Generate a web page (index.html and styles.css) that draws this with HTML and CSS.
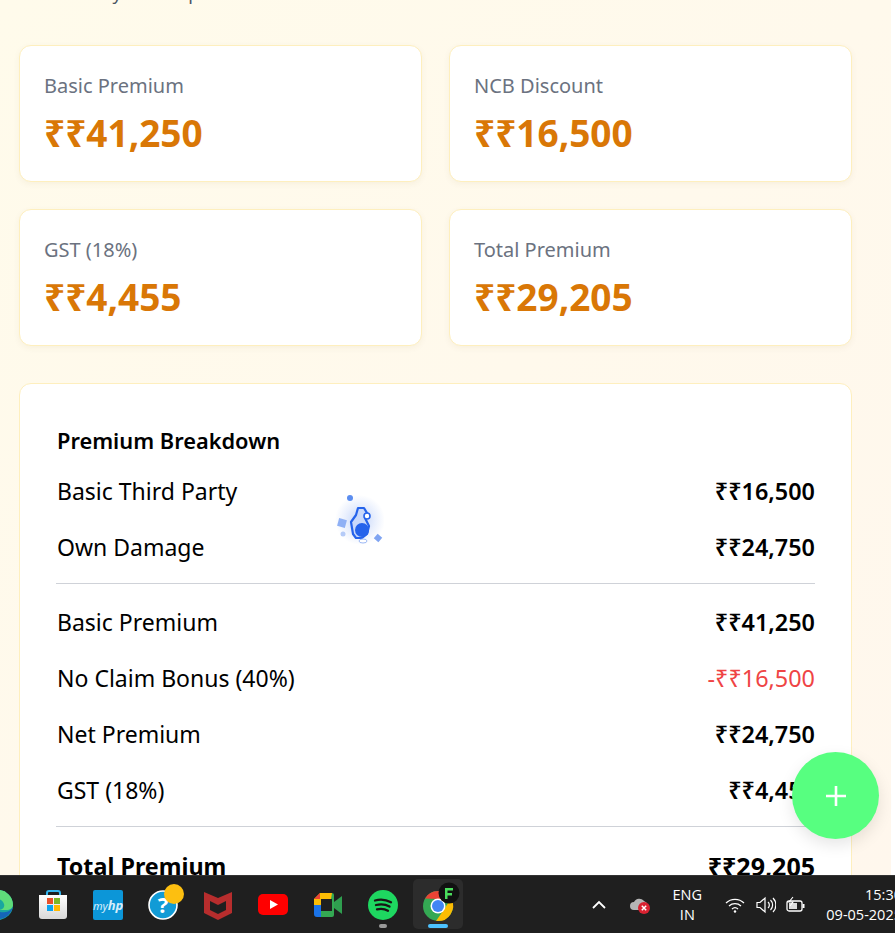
FILE: index.html
```html
<!DOCTYPE html>
<html lang="en">
<head>
  <meta charset="UTF-8">
  <title>Premium Summary</title>
  <link rel="stylesheet" href="styles.css">
</head>
<body>
  <div class="screen">
    <div class="page">
      <div class="content">
        <p class="subtitle">Review your net premium</p>

        <div class="stats">
          <div class="stat-card">
            <div class="stat-label">Basic Premium</div>
            <div class="stat-value">₹₹41,250</div>
          </div>
          <div class="stat-card">
            <div class="stat-label">NCB Discount</div>
            <div class="stat-value">₹₹16,500</div>
          </div>
          <div class="stat-card">
            <div class="stat-label">GST (18%)</div>
            <div class="stat-value">₹₹4,455</div>
          </div>
          <div class="stat-card">
            <div class="stat-label">Total Premium</div>
            <div class="stat-value">₹₹29,205</div>
          </div>
        </div>

        <div class="breakdown">
          <h3>Premium Breakdown</h3>
          <div class="row"><span>Basic Third Party</span><span class="amount">₹₹16,500</span></div>
          <div class="row"><span>Own Damage</span><span class="amount">₹₹24,750</span></div>
          <hr>
          <div class="row"><span>Basic Premium</span><span class="amount">₹₹41,250</span></div>
          <div class="row"><span>No Claim Bonus (40%)</span><span class="amount minus">-₹₹16,500</span></div>
          <div class="row"><span>Net Premium</span><span class="amount">₹₹24,750</span></div>
          <div class="row"><span>GST (18%)</span><span class="amount">₹₹4,455</span></div>
          <hr>
          <div class="row total"><span>Total Premium</span><span class="amount">₹₹29,205</span></div>
        </div>
      </div>
    </div>

    <!-- floating loader -->
    <svg class="loader" width="50" height="54" viewBox="0 0 50 54">
      <defs>
        <radialGradient id="glow">
          <stop offset="0" stop-color="#2563eb" stop-opacity="0.28"/>
          <stop offset="0.6" stop-color="#2563eb" stop-opacity="0.1"/>
          <stop offset="1" stop-color="#2563eb" stop-opacity="0"/>
        </radialGradient>
      </defs>
      <circle cx="26" cy="27" r="25" fill="url(#glow)"/>
      <circle cx="16" cy="5" r="3" fill="#5b8df0"/>
      <rect x="4" y="26" width="8" height="8" transform="rotate(15 8 30)" fill="#8fb0f5"/>
      <circle cx="9" cy="41" r="2.5" fill="#b5cbf8"/>
      <rect x="41" y="42" width="6" height="6" transform="rotate(40 44 45)" fill="#7fa4f2"/>
      <path d="M24 15h6l3 5-2 5 4 8-2 8-5 4h-6l-3-4-2-12 5-7z" fill="#c9d9fb" stroke="#2563eb" stroke-width="2.200" stroke-linejoin="round"/>
      <circle cx="28" cy="37" r="7" fill="#2563eb"/>
      <circle cx="33" cy="23" r="3" fill="#fff" stroke="#2563eb" stroke-width="1.600"/>
      <ellipse cx="29" cy="48" rx="4" ry="2" fill="#fff" stroke="#9db9f5" stroke-width="1"/>
    </svg>

    <button class="fab"><svg width="24" height="24" viewBox="0 0 24 24"><path d="M12 2v20M2 12h20" stroke="#fff" stroke-width="2.600"/></svg></button>

    <div class="taskbar">
      <div class="apps">
        <div class="slot">
          <svg width="30" height="30" viewBox="0 0 30 30">
            <circle cx="15" cy="15" r="15" fill="#1aa6a0"/>
            <path d="M15 0a15 15 0 0 1 15 15c0 3-3 5-7 5H15c5 0 7-3 6-6C19 8 10 7 4 10A15 15 0 0 1 15 0z" fill="#5fdc7a"/>
            <path d="M8 27C14 31 26 30 30 17c-3 5-9 6-13 5-4-1-8-1-9 5z" fill="#1565b8"/>
          </svg>
        </div>
        <div class="slot">
          <svg width="30" height="30" viewBox="0 0 30 30">
            <defs>
              <linearGradient id="bag" x1="0" y1="0" x2="0" y2="1">
                <stop offset="0" stop-color="#fff"/>
                <stop offset="1" stop-color="#d8d8d8"/>
              </linearGradient>
            </defs>
            <path d="M9 6V3a2 2 0 0 1 2-2h9a2 2 0 0 1 2 2v3" fill="none" stroke="#33b5ee" stroke-width="2"/>
            <path d="M1 5h28v21a3 3 0 0 1-3 3H4a3 3 0 0 1-3-3z" fill="url(#bag)"/>
            <rect x="9" y="8" width="6" height="6" fill="#e8502a"/>
            <rect x="16" y="8" width="6" height="6" fill="#7cb827"/>
            <rect x="9" y="15" width="6" height="6" fill="#0ca4ef"/>
            <rect x="16" y="15" width="6" height="6" fill="#ffb902"/>
          </svg>
        </div>
        <div class="slot"><div class="myhp">my<i>hp</i></div></div>
        <div class="slot">
          <svg class="help" width="30" height="30" viewBox="0 0 30 30">
            <circle cx="15" cy="15" r="14" fill="#119bd6" stroke="#fff" stroke-width="1.600"/>
            <text x="15" y="23" text-anchor="middle" class="help-mark">?</text>
            <circle cx="26" cy="4" r="10" fill="#fdbf10"/>
          </svg>
        </div>
        <div class="slot">
          <svg width="28" height="30" viewBox="0 0 28 30">
            <path d="M0 2l14 6 14-6v21l-14 7-14-7z" fill="#b72d2d"/>
            <path d="M6 11l8 4 8-4v9l-8 4-8-4z" fill="#1f1f1f"/>
          </svg>
        </div>
        <div class="slot">
          <svg width="30" height="21" viewBox="0 0 30 21">
            <rect width="30" height="21" rx="5" fill="#f00"/>
            <path d="M12 6l8 4.500-8 4.500z" fill="#fff"/>
          </svg>
        </div>
        <div class="slot">
          <svg width="28" height="24" viewBox="0 0 28 24">
            <path d="M6 0h12v6H7v6H0V6z" fill="#fbbc04"/>
            <path d="M0 6l6-6v6z" fill="#ea4335"/>
            <path d="M0 12h7v6h11v6H3a3 3 0 0 1-3-3z" fill="#1a73e8"/>
            <path d="M18 0a2 2 0 0 1 2 2v20a2 2 0 0 1-2 2h-1v-6h1V6h-1z" fill="#34a853"/>
            <path d="M7 18h11v6H7z" fill="#34a853"/>
            <path d="M20 9l8-6v18l-8-6z" fill="#2f9e4f"/>
          </svg>
        </div>
        <div class="slot">
          <svg width="30" height="30" viewBox="0 0 30 30">
            <circle cx="15" cy="15" r="15" fill="#1ed760"/>
            <path d="M7 10.500c5-1.500 11-1 16 1.800M8 15c4.500-1.200 9.500-.8 13.500 1.600M9 19.300c3.600-.9 7.600-.6 11 1.400" fill="none" stroke="#191414" stroke-width="2.300" stroke-linecap="round"/>
          </svg>
          <span class="dot"></span>
        </div>
        <div class="slot active">
          <svg class="chrome" width="40" height="42" viewBox="0 0 40 42">
            <circle cx="15" cy="24" r="15" fill="#34a853"/>
            <path d="M2 16.500A15 15 0 0 1 28 16.500L15 17z" fill="#ea4335"/>
            <path d="M28 16.500A15 15 0 0 1 13 38.900l7-10z" fill="#fbbc04"/>
            <circle cx="15" cy="24" r="7.500" fill="#fff"/>
            <circle cx="15" cy="24" r="6" fill="#4285f4"/>
            <circle cx="26" cy="11" r="10.500" fill="#111"/>
            <path d="M22 6h8v2.500h-5.500v2.500H29v2.500h-4.500V17H22z" fill="#4ade5c"/>
          </svg>
          <span class="bar"></span>
        </div>
      </div>

      <div class="tray">
        <svg width="16" height="10" viewBox="0 0 16 10"><path d="M2 8l6-6 6 6" fill="none" stroke="#fff" stroke-width="1.800"/></svg>
        <svg class="cloud" width="22" height="20" viewBox="0 0 22 20">
          <path d="M5 15a4 4 0 0 1 0-8 6 6 0 0 1 10-1 5 5 0 0 1 1 9z" fill="#b5b5b5"/>
          <circle cx="15" cy="13" r="6" fill="#d92231"/>
          <path d="M12.800 10.800l4.400 4.400M17.200 10.800l-4.400 4.400" stroke="#fff" stroke-width="1.500"/>
        </svg>
        <div class="lang">ENG<br>IN</div>
        <div class="tray-icons">
          <svg width="20" height="16" viewBox="0 0 20 16" fill="none" stroke="#fff" stroke-width="1.300">
            <path d="M1 6a13 13 0 0 1 18 0M4 9a9 9 0 0 1 12 0M7 12a4.500 4.500 0 0 1 6 0"/>
            <circle cx="10" cy="14.500" r="1.200" fill="#fff" stroke="none"/>
          </svg>
          <svg width="20" height="18" viewBox="0 0 20 18" fill="none" stroke="#fff" stroke-width="1.200">
            <path d="M1 6.500h3L9 2v14l-5-4.500H1z"/>
            <path d="M12 6a4 4 0 0 1 0 6M14.500 4a7 7 0 0 1 0 10M17 2a10 10 0 0 1 0 14"/>
          </svg>
          <svg width="20" height="18" viewBox="0 0 20 18" fill="none" stroke="#fff" stroke-width="1.300">
            <rect x="1" y="5" width="15" height="10" rx="2"/>
            <rect x="3" y="7" width="8" height="6" fill="#ddd" stroke="none"/>
            <path d="M16.500 8h2v4h-2z" fill="#fff" stroke="none"/>
            <path d="M7 1L3 6h4l-3 4" stroke-width="1.100"/>
          </svg>
        </div>
        <div class="clock">15:30<br>09-05-2025</div>
      </div>
    </div>
  </div>
</body>
</html>
```

FILE: styles.css
```css
* {
  box-sizing: border-box;
}
body {
  margin: 0;
  background: #fff;
  font-family: 'Noto Sans', 'Open Sans', sans-serif;
}
.screen {
  position: relative;
  width: 895px;
  height: 933px;
  overflow: hidden;
  display: flex;
  flex-direction: column;
}
.page {
  flex: 1;
  width: 891px;
  overflow: hidden;
  background: linear-gradient(135deg, #fffbeb, #fff7ed);
}
.content {
  margin-top: -21px;
  padding: 0 39px 0 19px;
}
.subtitle {
  margin: 0;
  padding-left: 30px;
  height: 66px;
  font-size: 18px;
  line-height: 28px;
  color: #4b5563;
}
.stats {
  display: grid;
  grid-template-columns: 403px 403px;
  gap: 27px;
}
.stat-card {
  height: 137px;
  padding: 25px 24px;
  background: #fff;
  border: 1px solid #feefbe;
  border-radius: 12px;
  box-shadow: 0 2px 6px rgba(120,90,0,0.06);
}
.stat-label {
  font-size: 20px;
  line-height: 30px;
  color: #6b7280;
}
.stat-value {
  font-size: 37px;
  line-height: 50px;
  margin-top: 7px;
  font-weight: 700;
  color: #d97706;
}
.breakdown {
  margin-top: 37px;
  padding: 37px 36px 0 37px;
  height: 600px;
  background: #fff;
  border: 1px solid #feefbe;
  border-radius: 12px;
}
.breakdown h3 {
  margin: 0 0 3px;
  font-size: 21.8px;
  line-height: 40px;
  font-weight: 600;
  color: #000;
}
.row {
  display: flex;
  justify-content: space-between;
  font-size: 23px;
  line-height: 55.7px;
  color: #000;
}
.row .amount {
  font-size: 23.4px;
  font-weight: 600;
}
.row .minus {
  font-weight: 400;
  color: #ef4444;
}
.row.total {
  margin-top: 12px;
  font-size: 23.3px;
  font-weight: 700;
}
.row.total .amount {
  font-size: 25px;
  font-weight: 700;
}
.breakdown hr {
  margin: 8px 0 11px -1px;
  border: 0;
  border-top: 1px solid #cfd2d8;
}
.loader {
  position: absolute;
  left: 334px;
  top: 493px;
}
.fab {
  position: absolute;
  left: 792px;
  top: 752px;
  width: 87px;
  height: 87px;
  border: 0;
  border-radius: 50%;
  background: #57ff80;
  box-shadow: 0 6px 16px rgba(0,0,0,0.1);
  display: flex;
  align-items: center;
  justify-content: center;
}
.taskbar {
  height: 58px;
  flex-shrink: 0;
  background: #1f1f1f;
  border-top: 1px solid #333;
  display: flex;
  color: #fff;
}
.apps {
  display: flex;
  gap: 5px;
  margin-left: -27px;
  padding-top: 3px;
}
.slot {
  position: relative;
  width: 50px;
  height: 50px;
  border-radius: 5px;
  display: flex;
  align-items: center;
  justify-content: center;
  padding-top: 1px;
}
.slot.active {
  background: #2c2c2c;
}
.chrome {
  margin-top: -4px;
  margin-left: 10px;
}
.help {
  overflow: visible;
}
.myhp {
  width: 30px;
  height: 30px;
  border-radius: 2px;
  background: #0c96d8;
  color: #d8eefa;
  font-size: 11px;
  line-height: 30px;
  text-align: center;
  font-style: italic;
}
.myhp i {
  font-size: 13px;
  font-weight: 700;
}
.help-mark {
  font-size: 22px;
  font-weight: 700;
  fill: #fff;
}
.dot {
  position: absolute;
  left: 21px;
  bottom: 1px;
  width: 8px;
  height: 4px;
  border-radius: 2px;
  background: #9a9a9a;
}
.bar {
  position: absolute;
  left: 15px;
  bottom: 1px;
  width: 20px;
  height: 4px;
  border-radius: 2px;
  background: #4cc2ff;
}
.tray {
  margin-left: auto;
  margin-right: -7px;
  display: flex;
  align-items: center;
  font-size: 14.5px;
  line-height: 20px;
  font-family: 'Open Sans', 'Noto Sans', sans-serif;
}
.cloud {
  margin-left: 22px;
}
.lang {
  width: 40px;
  margin-left: 16.5px;
  text-align: center;
}
.tray-icons {
  margin-left: 18px;
  display: flex;
  gap: 10.5px;
  align-items: center;
}
.clock {
  margin-left: 20px;
  text-align: right;
}
```
